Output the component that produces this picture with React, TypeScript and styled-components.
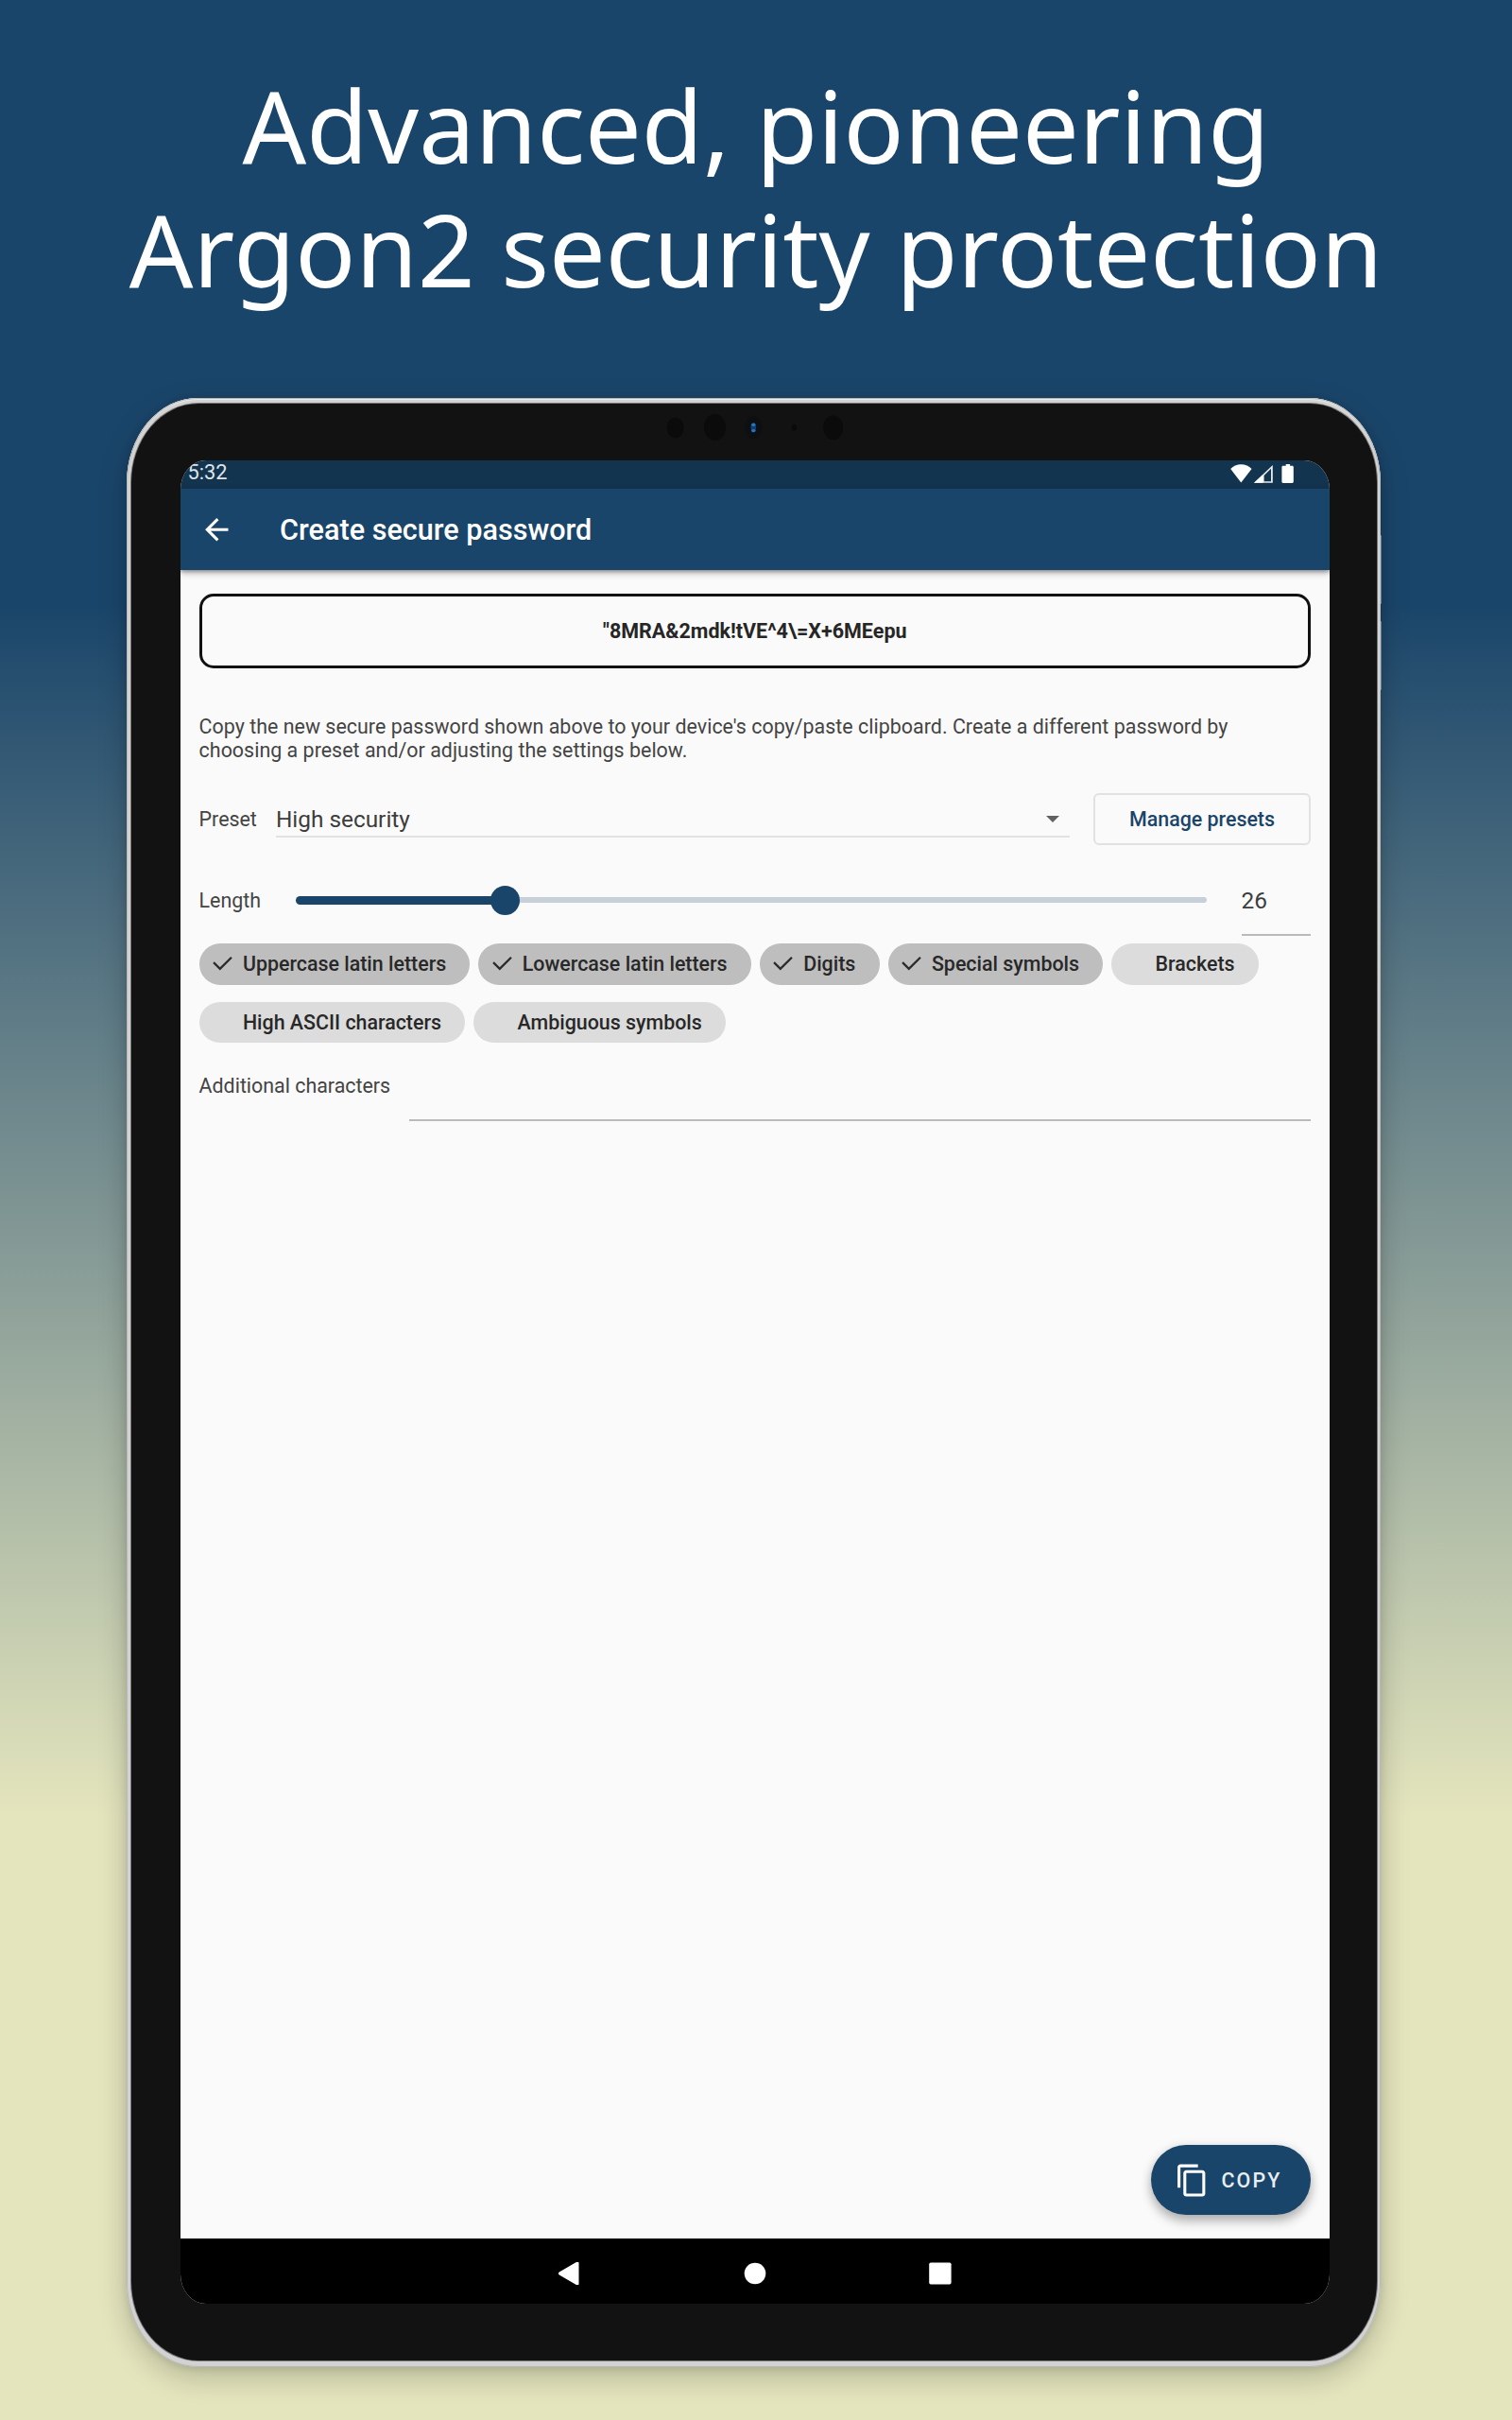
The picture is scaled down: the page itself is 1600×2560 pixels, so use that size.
import React from "react";
import styled, { createGlobalStyle } from "styled-components";

const navy = "#1a456a";
const baseText = "#444";

const GlobalStyle = createGlobalStyle`
  *, *::before, *::after { box-sizing: border-box; }
  body { margin: 0; }
  button { font: inherit; border: 0; padding: 0; background: none; }
`;

const Page = styled.main`
  width: 1600px;
  height: 2560px;
  display: flex;
  flex-direction: column;
  align-items: center;
  overflow: hidden;
  background: linear-gradient(180deg, ${navy} 0, ${navy} 25%, #e4e5bd 75%, #e4e5bd 100%);
  font-family: Roboto, "Liberation Sans", sans-serif;
`;

const Headline = styled.h1`
  margin: 0;
  height: 421px;
  padding-top: 67px;
  color: #fff;
  font: 400 106px/131px "Noto Sans", "Open Sans", sans-serif;
  text-align: center;
  white-space: pre-line;
`;

const Device = styled.section`
  position: relative;
  width: 1327px;
  height: 2083px;
  margin-right: 5px;
  padding: 6px 4px 7px 5px;
  border-radius: 75px / 90px;
  background: #d2d2d2;
  box-shadow:
    inset 0 0 0 1px #b9bab8,
    inset 0 2px 1px #ededed,
    0 10px 30px rgba(0, 0, 0, 0.22),
    0 1px 8px rgba(0, 0, 0, 0.1);
`;

const SideButton = styled.i<{ $top: number }>`
  position: absolute;
  right: -1px;
  top: ${(p) => p.$top}px;
  width: 2px;
  height: 73px;
  border-radius: 1px;
  background: rgba(215, 220, 225, 0.4);
`;

const Bezel = styled.div`
  display: flex;
  flex-direction: column;
  width: 100%;
  height: 100%;
  padding: 0 50px 60px 52px;
  border-radius: 71px / 84px;
  background: #121212;
  box-shadow: 0 0 0 1px #777;
`;

const CameraBar = styled.div`
  flex: none;
  height: 60px;
  display: flex;
  justify-content: center;
  padding-top: 3px;
`;

const Screen = styled.div`
  position: relative;
  flex: 1;
  display: flex;
  flex-direction: column;
  overflow: hidden;
  border-radius: 27px / 31px;
  background: #fafafa;
`;

const StatusBar = styled.div`
  flex: none;
  height: 30px;
  display: flex;
  align-items: center;
  justify-content: space-between;
  padding: 0 37px 4px 7.5px;
  background: #13344f;
  color: #dfe4e8;
  font-size: 21.8px;
  line-height: 26px;
`;

const StatusIcons = styled.svg`
  display: block;
  width: 68px;
  height: 22px;
`;

const AppBar = styled.header`
  position: relative;
  flex: none;
  height: 86px;
  display: flex;
  align-items: center;
  gap: 49px;
  padding-left: 19.5px;
  background: ${navy};
  color: #fff;
  box-shadow: 0 3px 7px rgba(0, 0, 0, 0.3), 0 2px 3px rgba(0, 0, 0, 0.2);
`;

const Title = styled.h2`
  margin: 0;
  padding-top: 2px;
  font-size: 30.6px;
  font-weight: 500;
  line-height: 36px;
`;

const Icon = styled.svg<{ $size: number }>`
  display: block;
  flex: none;
  width: ${(p) => p.$size}px;
  height: ${(p) => p.$size}px;
`;

const Content = styled.div`
  flex: 1;
  display: flex;
  flex-direction: column;
  padding: 25px 20px 0 19.6px;
  color: ${baseText};
  font-size: 21.4px;
`;

const PasswordBox = styled.output`
  height: 79px;
  display: flex;
  align-items: center;
  justify-content: center;
  border: 3px solid #111;
  border-radius: 15px;
  color: #262626;
  font-size: 21.5px;
  font-weight: 700;
`;

const Description = styled.p`
  margin: 50px 0 0;
  line-height: 24.5px;
  letter-spacing: 0.028px;
  white-space: pre-line;
`;

const PresetRow = styled.div`
  display: flex;
  align-items: center;
  height: 55px;
  margin-top: 33px;
`;

const Select = styled.div`
  flex: 1;
  display: flex;
  align-items: center;
  justify-content: space-between;
  height: 38px;
  margin: 0 25px 0 20px;
  padding: 2px 11px 0 0;
  border-bottom: 2px solid #e2e2e2;
  color: #3d3d3d;
  font-size: 24.4px;
`;

const Caret = styled.i`
  border: 7.5px solid transparent;
  border-top-color: #616161;
  border-bottom-width: 0;
`;

const OutlineButton = styled.button`
  width: 230px;
  height: 55px;
  border: 2px solid #e1e1e1;
  border-radius: 6px;
  color: ${navy};
  font-weight: 500;
`;

const LengthRow = styled.div`
  display: flex;
  align-items: center;
  height: 72px;
  margin: 22px 0 2px;
`;

const Slider = styled.div`
  flex: 1;
  display: flex;
  align-items: center;
  margin: 0 36.5px 0 37px;
`;

const ActiveTrack = styled.div`
  width: 221px;
  height: 9px;
  border-radius: 5px;
  background: ${navy};
`;

const Thumb = styled.div`
  flex: none;
  width: 31px;
  height: 31px;
  margin: 0 -15px;
  border-radius: 50%;
  background: ${navy};
  z-index: 1;
`;

const InactiveTrack = styled.div`
  flex: 1;
  height: 6px;
  border-radius: 0 3px 3px 0;
  background: #c5d0d9;
`;

const NumberField = styled.div`
  display: flex;
  align-items: center;
  align-self: flex-start;
  width: 73.5px;
  height: 74px;
  border-bottom: 2px solid #bababa;
  color: #3d3d3d;
  font-size: 24.4px;
`;

const Chips = styled.div`
  display: flex;
  flex-wrap: wrap;
  gap: 18px 9.1px;
  margin-top: 8px;
`;

const Chip = styled.div<{ $selected: boolean }>`
  display: flex;
  align-items: center;
  gap: 7.8px;
  height: 43.5px;
  padding: 0 25.2px 0 11.5px;
  border-radius: 22px;
  background: ${(p) => (p.$selected ? "#bebebe" : "#dcdcdc")};
  color: #282828;
  font-weight: 500;
`;

const CheckSlot = styled.span`
  width: 27px;
  height: 27px;
`;

const ExtraRow = styled.div`
  display: flex;
  align-items: center;
  gap: 19.5px;
  height: 73px;
  margin-top: 9px;
`;

const ExtraField = styled.div`
  flex: 1;
  align-self: flex-start;
  height: 74px;
  border-bottom: 2px solid #bababa;
`;

const CopyButton = styled.button`
  position: absolute;
  right: 20px;
  bottom: 94px;
  width: 169px;
  height: 74px;
  display: flex;
  align-items: center;
  gap: 13px;
  padding-left: 24.5px;
  border-radius: 37px;
  background: ${navy};
  color: #e9eef2;
  font-size: 21.4px;
  font-weight: 500;
  letter-spacing: 2.1px;
  box-shadow: 0 7px 12px rgba(0, 0, 0, 0.24), 0 2px 12px rgba(0, 0, 0, 0.12);
`;

const NavBar = styled.nav`
  flex: none;
  height: 69px;
  display: flex;
  align-items: center;
  justify-content: center;
  gap: 172.6px;
  padding: 4px 1px 0 0;
  background: #000;
`;

const CheckMark = () => (
  <Icon $size={27} viewBox="0 0 100 100" fill="none" stroke="#2b2b2b" strokeWidth="8.5">
    <path d="M15 45 40 70 85 25" />
  </Icon>
);

const chips = [
  { label: "Uppercase latin letters", selected: true },
  { label: "Lowercase latin letters", selected: true },
  { label: "Digits", selected: true },
  { label: "Special symbols", selected: true },
  { label: "Brackets", selected: false },
  { label: "High ASCII characters", selected: false },
  { label: "Ambiguous symbols", selected: false },
];

export default function App() {
  return (
    <>
      <GlobalStyle />
      <Page>
        <Headline>{"Advanced, pioneering\nArgon2 security protection"}</Headline>
        <Device>
          <SideButton $top={145} />
          <SideButton $top={236} />
          <Bezel>
            <CameraBar>
              <svg width="200" height="50" viewBox="699 427 200 50">
                <ellipse cx="714.7" cy="449.5" rx="9" ry="10.8" fill="#0b0b0b" />
                <ellipse cx="756.5" cy="449" rx="11.5" ry="14" fill="#0b0b0b" />
                <ellipse cx="797.3" cy="449.3" rx="9" ry="12" fill="#0e0f10" />
                <ellipse cx="797.3" cy="449.3" rx="4.5" ry="7" fill="#0a1018" />
                <ellipse cx="797.3" cy="449.3" rx="2.8" ry="5.2" fill="#123f70" />
                <ellipse cx="797.3" cy="446.3" rx="2.3" ry="1.6" fill="#2876bd" />
                <ellipse cx="797.3" cy="452.5" rx="2.3" ry="1.6" fill="#2876bd" />
                <ellipse cx="840.3" cy="449.3" rx="2.8" ry="3.4" fill="#0a0a0a" />
                <ellipse cx="881.7" cy="449.3" rx="10.5" ry="13" fill="#0b0b0b" />
              </svg>
            </CameraBar>
            <Screen>
              <StatusBar>
                <span>5:32</span>
                <StatusIcons viewBox="0 0 68 22" fill="#fff">
                  <path d="M11.3 21.5.2 7.1C3 4 7 2.2 11.3 2.2S19.7 4 22.5 7.1Z" />
                  <path d="M25 21.8H44.8V3Zm10.6-1.6V14L43 6.8v13.4Z" fillRule="evenodd" opacity=".9" />
                  <path d="M34.5 13 25 21.8h9.5Z" />
                  <path d="M58.7 2h4.4v1.8h2.3c.8 0 1.4.6 1.4 1.3v15.5c0 .8-.6 1.4-1.4 1.4h-9.6c-.8 0-1.4-.6-1.4-1.4V5.1c0-.7.6-1.3 1.4-1.3h2.9Z" />
                </StatusIcons>
              </StatusBar>
              <AppBar>
                <Icon $size={36.6} viewBox="0 0 24 24" fill="#fff">
                  <path d="M20 11H7.83l5.59-5.59L12 4l-8 8 8 8 1.41-1.41L7.83 13H20v-2z" />
                </Icon>
                <Title>Create secure password</Title>
              </AppBar>
              <Content>
                <PasswordBox>{'"8MRA&2mdk!tVE^4\\=X+6MEepu'}</PasswordBox>
                <Description>
                  {
                    "Copy the new secure password shown above to your device's copy/paste clipboard. Create a different password by\nchoosing a preset and/or adjusting the settings below."
                  }
                </Description>
                <PresetRow>
                  <span>Preset</span>
                  <Select>
                    <span>High security</span>
                    <Caret />
                  </Select>
                  <OutlineButton>Manage presets</OutlineButton>
                </PresetRow>
                <LengthRow>
                  <span>Length</span>
                  <Slider>
                    <ActiveTrack />
                    <Thumb />
                    <InactiveTrack />
                  </Slider>
                  <NumberField>26</NumberField>
                </LengthRow>
                <Chips>
                  {chips.map((c) => (
                    <Chip key={c.label} $selected={c.selected}>
                      {c.selected ? <CheckMark /> : <CheckSlot />}
                      {c.label}
                    </Chip>
                  ))}
                </Chips>
                <ExtraRow>
                  <span>Additional characters</span>
                  <ExtraField />
                </ExtraRow>
              </Content>
              <CopyButton>
                <Icon $size={37} viewBox="0 0 24 24" fill="#fff">
                  <path d="M16 1H4c-1.1 0-2 .9-2 2v14h2V3h12V1zm3 4H8c-1.1 0-2 .9-2 2v14c0 1.1.9 2 2 2h11c1.1 0 2-.9 2-2V7c0-1.1-.9-2-2-2zm0 16H8V7h11v14z" />
                </Icon>
                COPY
              </CopyButton>
              <NavBar>
                <Icon $size={24} viewBox="0 0 24 24" fill="#fff">
                  <path d="M22.5 1v22c0 1.4-1.2 1.9-2.3 1.2L1.8 13.4c-1.2-.8-1.2-2 0-2.8L20.2-.2c1.1-.7 2.3-.2 2.3 1.2Z" />
                </Icon>
                <Icon $size={24} viewBox="0 0 24 24" fill="#fff">
                  <circle cx="12" cy="12" r="11.3" />
                </Icon>
                <Icon $size={24} viewBox="0 0 24 24" fill="#fff">
                  <rect x=".2" y=".4" width="23.4" height="23.2" rx="1.8" />
                </Icon>
              </NavBar>
            </Screen>
          </Bezel>
        </Device>
      </Page>
    </>
  );
}
